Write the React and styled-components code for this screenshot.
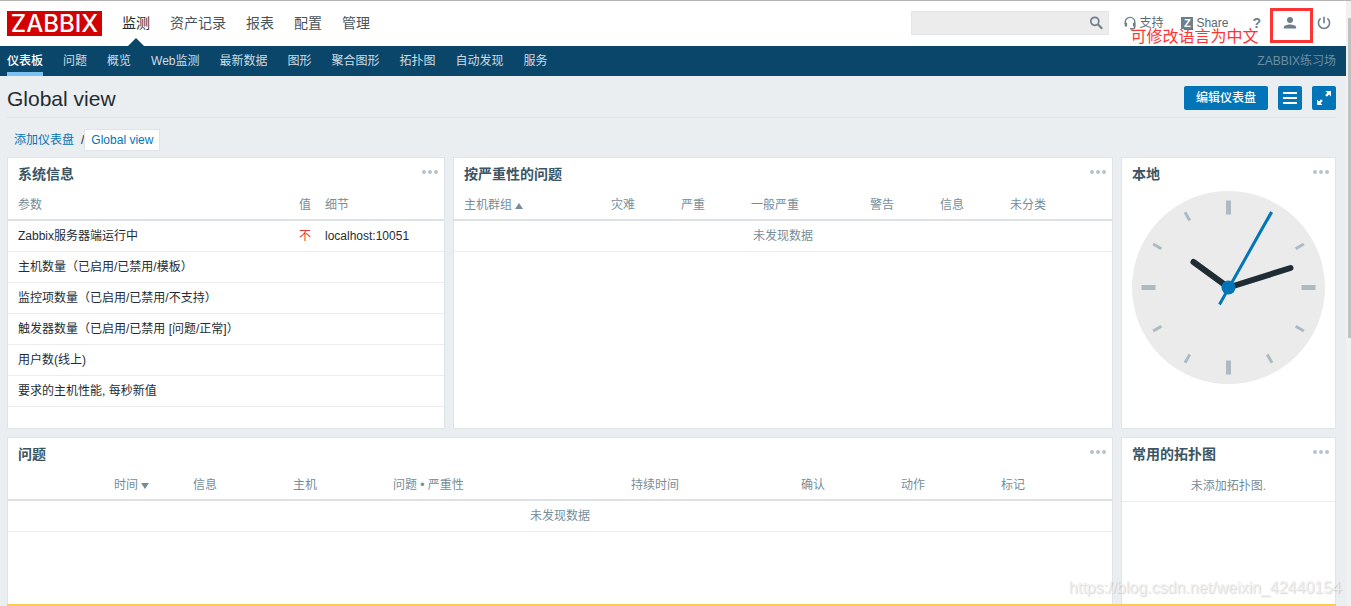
import React from 'react';
import styled, { createGlobalStyle } from 'styled-components';

const mainMenu = ['监测', '资产记录', '报表', '配置', '管理'];

const subMenu = ['仪表板', '问题', '概览', 'Web监测', '最新数据', '图形', '聚合图形', '拓扑图', '自动发现', '服务'];

const systemRows = [
  { name: 'Zabbix服务器端运行中', value: '不', details: 'localhost:10051' },
  { name: '主机数量（已启用/已禁用/模板）' },
  { name: '监控项数量（已启用/已禁用/不支持）' },
  { name: '触发器数量（已启用/已禁用 [问题/正常]）' },
  { name: '用户数(线上)' },
  { name: '要求的主机性能, 每秒新值' },
];

const severityColumns = [
  { label: '主机群组', width: 150, sort: 'up' },
  { label: '灾难', width: 70 },
  { label: '严重', width: 70 },
  { label: '一般严重', width: 119 },
  { label: '警告', width: 70 },
  { label: '信息', width: 70 },
  { label: '未分类', width: 109 },
];

const problemColumns = [
  { label: '', width: 99 },
  { label: '时间', width: 79, sort: 'down' },
  { label: '信息', width: 100 },
  { label: '主机', width: 100 },
  { label: '问题 • 严重性', width: 238 },
  { label: '持续时间', width: 170 },
  { label: '确认', width: 100 },
  { label: '动作', width: 100 },
  { label: '标记', width: 118 },
];

function SearchIcon() {
  return (
    <svg width="14" height="14" viewBox="0 0 14 14" fill="none" stroke="#6c7f8b">
      <circle cx="5.8" cy="5.3" r="4" strokeWidth="1.7" />
      <path d="M8.8 8.3L13.2 12.7" strokeWidth="2.1" />
    </svg>
  );
}

function SupportIcon() {
  return (
    <svg width="12" height="14" viewBox="0 0 12 14" fill="none" stroke="#6c7f8b">
      <path d="M1.2 8V6.2a4.8 4.8 0 0 1 9.6 0v4.6c0 1.2-.8 1.9-2 1.9H6" strokeWidth="1.4" />
      <path d="M1.9 6.8v3.8M10.1 6.8v3.8" strokeWidth="2.4" />
    </svg>
  );
}

function UserIcon() {
  return (
    <svg width="14" height="14" viewBox="0 0 14 14" fill="#6c7f8b">
      <circle cx="7" cy="4" r="3" />
      <path d="M.8 12.6V11.4C.8 9.4 4.6 8.5 7 8.5s6.2.9 6.2 2.9v1.2z" />
    </svg>
  );
}

function PowerIcon() {
  return (
    <svg width="14" height="14" viewBox="0 0 14 14" fill="none" stroke="#6c7f8b" strokeWidth="1.6">
      <path d="M3.6 2.4a5.6 5.6 0 1 0 6.8 0M7 .8v6.4" />
    </svg>
  );
}

function ListIcon() {
  return (
    <svg width="14" height="14" viewBox="0 0 14 14" fill="#fff">
      <path d="M0 1h14v2H0zM0 6h14v2H0zM0 11h14v2H0z" />
    </svg>
  );
}

function ExpandIcon() {
  return (
    <svg width="16" height="16" viewBox="0 0 16 16" fill="#fff">
      <path d="M9.5 1H15v5.5l-1.9-1.9-2.2 2.2-1.7-1.7 2.2-2.2zM6.5 15H1V9.5l1.9 1.9 2.2-2.2 1.7 1.7-2.2 2.2z" />
    </svg>
  );
}

function Clock() {
  const ticks = Array.from({ length: 12 }, (_, i) => i);
  return (
    <ClockFace viewBox="0 0 193 193" role="img" aria-label="本地时间">
      <circle cx="96.5" cy="96.5" r="96.5" fill="#ebebeb" />
      {ticks.map((i) => (
        <line
          key={i}
          x1="96.5"
          x2="96.5"
          y1="9.5"
          y2={i % 3 ? 19 : 23.5}
          stroke="#acbbc2"
          strokeWidth={i % 3 ? 3 : 5}
          transform={`rotate(${i * 30} 96.5 96.5)`}
        />
      ))}
      <g stroke="#1f2c33" strokeWidth="6" strokeLinecap="round">
        <path d="M96.5 96.5L61.5 71" />
        <path d="M96.5 96.5L158.5 77" />
      </g>
      <path d="M87.5 113.5L139.5 21" stroke="#0275b8" strokeWidth="3" />
      <circle cx="96.5" cy="96.5" r="7" fill="#0275b8" />
    </ClockFace>
  );
}

function Widget({ title, area, children }) {
  return (
    <Panel $area={area}>
      <PanelHead>
        <PanelTitle>{title}</PanelTitle>
        <DotsButton aria-label="更多">
          <svg width="16" height="4" viewBox="0 0 16 4" fill="#b5c4cc">
            <circle cx="2" cy="2" r="2" />
            <circle cx="8" cy="2" r="2" />
            <circle cx="14" cy="2" r="2" />
          </svg>
        </DotsButton>
      </PanelHead>
      {children}
    </Panel>
  );
}

function EmptyTable({ columns }) {
  return (
    <Table>
      <thead>
        <tr>
          {columns.map((c, i) => (
            <Th key={i} $width={c.width}>
              {c.label}
              {c.sort && <Arrow $dir={c.sort} />}
            </Th>
          ))}
        </tr>
      </thead>
      <tbody>
        <tr>
          <EmptyTd colSpan={columns.length}>未发现数据</EmptyTd>
        </tr>
      </tbody>
    </Table>
  );
}

export default function App() {
  return (
    <Page>
      <GlobalStyle />
      <Content>
        <Header>
          <Logo href="#">ZABBIX</Logo>
          <MainNav>
            {mainMenu.map((item, i) => (
              <MainLink key={item} href="#" $active={i === 0}>{item}</MainLink>
            ))}
          </MainNav>
          <Search>
            <SearchInput type="text" aria-label="搜索" />
            <SearchButton aria-label="搜索"><SearchIcon /></SearchButton>
          </Search>
          <Tools>
            <ToolLink href="#"><SupportIcon />支持</ToolLink>
            <ToolLink href="#"><ShareBadge>Z</ShareBadge>Share</ToolLink>
            <HelpLink href="#">?</HelpLink>
            <ProfileLink href="#" aria-label="用户"><UserIcon /></ProfileLink>
            <ToolLink href="#" aria-label="退出"><PowerIcon /></ToolLink>
            <Note>可修改语言为中文</Note>
          </Tools>
        </Header>
        <SubNav>
          {subMenu.map((item, i) => (
            <SubLink key={item} href="#" $active={i === 0}>{item}</SubLink>
          ))}
          <ServerName>ZABBIX练习场</ServerName>
        </SubNav>
        <Main>
          <TitleRow>
            <Title>Global view</Title>
            <EditButton>编辑仪表盘</EditButton>
            <IconButton aria-label="列表"><ListIcon /></IconButton>
            <IconButton aria-label="全屏"><ExpandIcon /></IconButton>
          </TitleRow>
          <Crumbs>
            <CrumbLink href="#">添加仪表盘</CrumbLink>
            <Slash>/</Slash>
            <CurrentCrumb href="#">Global view</CurrentCrumb>
          </Crumbs>
          <Dashboard>
            <Widget title="系统信息" area="system">
              <Table>
                <thead>
                  <tr>
                    <Th $width={284}>参数</Th>
                    <Th $width={26}>值</Th>
                    <Th $width={126}>细节</Th>
                  </tr>
                </thead>
                <tbody>
                  {systemRows.map((row) => (
                    <tr key={row.name}>
                      <Td>{row.name}</Td>
                      <Td $red>{row.value}</Td>
                      <Td>{row.details}</Td>
                    </tr>
                  ))}
                </tbody>
              </Table>
            </Widget>
            <Widget title="按严重性的问题" area="severity">
              <EmptyTable columns={severityColumns} />
            </Widget>
            <Widget title="本地" area="clock">
              <Clock />
            </Widget>
            <Widget title="问题" area="problems">
              <EmptyTable columns={problemColumns} />
            </Widget>
            <Widget title="常用的拓扑图" area="maps">
              <NoMaps>未添加拓扑图.</NoMaps>
            </Widget>
          </Dashboard>
        </Main>
        <BottomLine />
      </Content>
      <ScrollTrack><ScrollThumb /></ScrollTrack>
      <Watermark>https://blog.csdn.net/weixin_42440154</Watermark>
    </Page>
  );
}

const GlobalStyle = createGlobalStyle`
  * {
    box-sizing: border-box;
  }

  body {
    margin: 0;
    background: #ebeef0;
    color: #1f2c33;
    font: 12px/18px "Liberation Sans", "Noto Sans CJK SC", sans-serif;
  }

  a {
    text-decoration: none;
  }

  button,
  input {
    font: inherit;
    border: 0;
    padding: 0;
  }

  svg {
    display: block;
    flex: none;
  }
`;

const Page = styled.div`
  position: relative;
  display: flex;
  height: 100vh;
  overflow: hidden;
  border-top: 1px solid #b4b4b4;
`;

const Content = styled.div`
  position: relative;
  flex: 1;
  min-width: 0;
`;

const Header = styled.header`
  display: flex;
  align-items: center;
  height: 45px;
  padding: 0 10px 0 7px;
  background: #fff;
`;

const Logo = styled.a`
  width: 95px;
  height: 25px;
  background: #d40000;
  color: #fff;
  font-family: Inter, "Liberation Sans", sans-serif;
  font-size: 24px;
  font-weight: 500;
  line-height: 25px;
  text-align: center;
`;

const MainNav = styled.nav`
  display: flex;
  align-self: stretch;
  gap: 20px;
  margin-left: 20px;
`;

const MainLink = styled.a`
  position: relative;
  color: ${(p) => (p.$active ? '#1f2c33' : '#48545b')};
  font-size: 14px;
  line-height: 44px;

  &::after {
    content: '';
    display: ${(p) => (p.$active ? 'block' : 'none')};
    position: absolute;
    bottom: 0;
    left: 50%;
    margin-left: -8px;
    border: 8px solid transparent;
    border-top: 0;
    border-bottom-color: #0a466a;
  }
`;

const Search = styled.form`
  display: flex;
  width: 198px;
  height: 24px;
  margin: 0 0 1px auto;
  background: #ececec;
  border: 1px solid #e3e6e8;
`;

const SearchInput = styled.input`
  flex: 1;
  min-width: 0;
  padding: 0 5px;
  background: transparent;
`;

const SearchButton = styled.button`
  display: flex;
  align-items: center;
  justify-content: center;
  width: 24px;
  background: transparent;
`;

const Tools = styled.div`
  position: relative;
  display: flex;
  align-items: center;
  margin-left: 15px;
`;

const ToolLink = styled.a`
  display: flex;
  align-items: center;
  gap: 3px;
  margin: 0 18px 1px 0;
  color: #5a6971;

  &:last-of-type {
    margin: 0 5px 1px 4px;
  }
`;

const ShareBadge = styled.span`
  width: 12px;
  height: 12px;
  background: #6c7f8b;
  color: #fff;
  font-size: 11px;
  font-weight: bold;
  line-height: 12px;
  text-align: center;
`;

const HelpLink = styled.a`
  margin: 0 9px 1px 6px;
  color: #6c7f8b;
  font-size: 14px;
  font-weight: bold;
`;

const ProfileLink = styled.a`
  display: flex;
  align-items: center;
  justify-content: center;
  width: 43px;
  height: 35px;
  margin-top: 4px;
  padding: 0 4px 6px 0;
  border: 3px solid #fd3434;
`;

const Note = styled.span`
  position: absolute;
  top: 21px;
  left: 6px;
  color: #fd3434;
  font-size: 16px;
  line-height: 24px;
  white-space: nowrap;
`;

const SubNav = styled.nav`
  display: flex;
  gap: 20px;
  height: 30px;
  padding: 0 10px 0 7px;
  background: #0a466a;
`;

const SubLink = styled.a`
  height: 30px;
  color: ${(p) => (p.$active ? '#fff' : '#cfdce3')};
  font-weight: ${(p) => (p.$active ? 500 : 400)};
  line-height: 31px;
  border-bottom: ${(p) => (p.$active ? '4px solid #79c3f4' : '0')};
`;

const ServerName = styled.span`
  margin-left: auto;
  color: #6c8ea3;
  line-height: 31px;
`;

const Main = styled.main`
  padding: 0 10px 0 7px;
`;

const TitleRow = styled.div`
  display: flex;
  align-items: center;
  gap: 10px;
  height: 42px;
  border-bottom: 1px solid #dfe4e7;
`;

const Title = styled.h1`
  flex: 1;
  margin: 0;
  padding-top: 5px;
  font-size: 21px;
  font-weight: normal;
  line-height: 24px;
`;

const EditButton = styled.button`
  width: 84px;
  height: 24px;
  margin-top: 2px;
  padding-top: 1px;
  background: #0275b8;
  border-radius: 2px;
  color: #fff;
  font-weight: 500;
`;

const IconButton = styled.button`
  display: flex;
  align-items: center;
  justify-content: center;
  width: 24px;
  height: 24px;
  margin-top: 2px;
  background: #0275b8;
  border-radius: 2px;
`;

const Crumbs = styled.div`
  display: flex;
  align-items: center;
  height: 39px;
  padding: 4px 0 0 7px;
`;

const CrumbLink = styled.a`
  color: #0275b8;
`;

const Slash = styled.span`
  margin-left: 7px;
`;

const CurrentCrumb = styled.a`
  padding: 1px 6px;
  background: #fff;
  border: 1px solid #dfe4e7;
  color: #0275b8;
`;

const Dashboard = styled.div`
  display: grid;
  grid-template-columns: 438fr 660fr 215fr;
  grid-template-areas:
    'system severity clock'
    'problems problems maps';
  grid-auto-rows: minmax(272px, auto);
  gap: 8px;
`;

const Panel = styled.section`
  grid-area: ${(p) => p.$area};
  min-width: 0;
  background: #fff;
  border: 1px solid #dfe4e7;
`;

const PanelHead = styled.div`
  display: flex;
  justify-content: space-between;
  height: 31px;
  padding: 0 6px 0 10px;
`;

const PanelTitle = styled.h4`
  margin: 0;
  color: #3c5563;
  font-size: 14px;
  font-weight: bold;
  line-height: 33px;
`;

const DotsButton = styled.button`
  display: flex;
  align-items: center;
  height: 28px;
  background: transparent;
`;

const Table = styled.table`
  width: 100%;
  table-layout: fixed;
  border-collapse: separate;
  border-spacing: 0;
`;

const Th = styled.th`
  width: ${(p) => p.$width}px;
  height: 32px;
  padding: 2px 7px 0;
  border-bottom: 2px solid #dce2e5;
  color: #768d99;
  font-weight: normal;
  text-align: left;
  white-space: nowrap;

  &:first-child {
    padding-left: 10px;
  }
`;

const Arrow = styled.span`
  display: inline-block;
  margin-left: 3px;
  border: 4px solid transparent;
  border-width: ${(p) => (p.$dir === 'up' ? '0 4px 6px' : '6px 4px 0')};
  border-top-color: ${(p) => (p.$dir === 'down' ? '#768d99' : 'transparent')};
  border-bottom-color: ${(p) => (p.$dir === 'up' ? '#768d99' : 'transparent')};
`;

const Td = styled.td`
  height: 31px;
  padding: 0 7px;
  border-bottom: 1px solid #ebeef0;
  color: ${(p) => (p.$red ? '#e33734' : '#1f2c33')};
  white-space: nowrap;

  &:first-child {
    padding-left: 10px;
  }
`;

const EmptyTd = styled.td`
  height: 31px;
  padding: 0;
  border-bottom: 1px solid #ebeef0;
  color: #768d99;
  text-align: center;
`;

const ClockFace = styled.svg`
  width: 100%;
  padding: 2px 10px 0;
`;

const NoMaps = styled.p`
  margin: 0;
  padding-top: 2px;
  border-bottom: 1px solid #ebeef0;
  color: #768d99;
  line-height: 30px;
  text-align: center;
`;

const BottomLine = styled.div`
  position: absolute;
  right: 10px;
  bottom: 0;
  left: 7px;
  height: 2px;
  background: #ffc859;
`;

const ScrollTrack = styled.div`
  width: 5px;
  padding: 17px 0 0 2px;
  background: #f1f1f1;
`;

const ScrollThumb = styled.div`
  height: 320px;
  background: #c1c1c1;
`;

const Watermark = styled.span`
  position: absolute;
  right: 10px;
  bottom: 8px;
  color: rgba(240, 240, 240, 0.9);
  font-size: 16px;
  line-height: 20px;
  text-shadow: 1px 1px 1px rgba(0, 0, 0, 0.16);
`;
